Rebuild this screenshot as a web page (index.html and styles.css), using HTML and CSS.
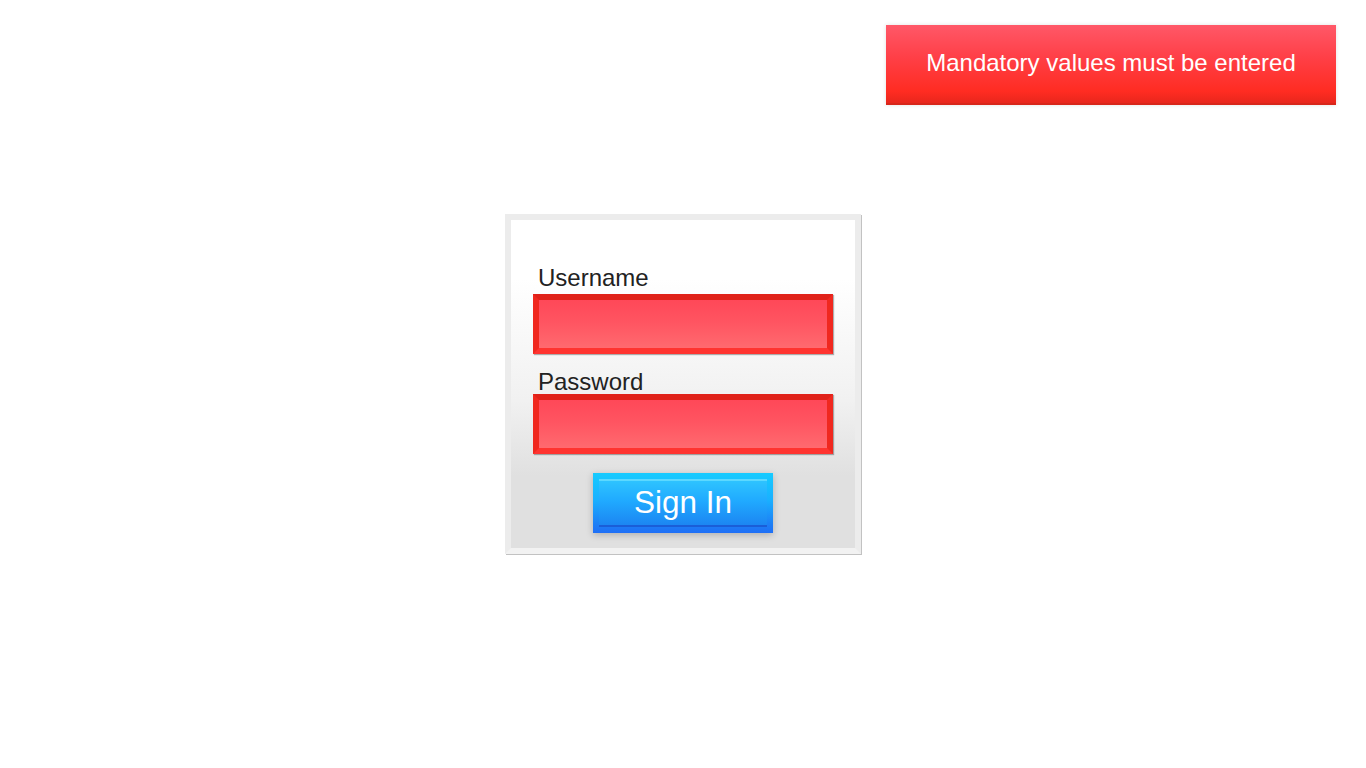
FILE: index.html
```html
<!DOCTYPE html>
<html lang="en">
<head>
<meta charset="utf-8">
<title>Sign In</title>
<link rel="stylesheet" href="styles.css">
</head>
<body>
<div class="toast">Mandatory values must be entered</div>
<main class="page">
  <form class="card">
    <div class="card-inner">
      <label class="field-label" for="username">Username</label>
      <input class="field field-error" id="username" type="text">
      <label class="field-label field-label-gap" for="password">Password</label>
      <input class="field field-error" id="password" type="password">
      <button class="btn" type="button"><span class="btn-inner">Sign In</span></button>
    </div>
  </form>
</main>
</body>
</html>
```

FILE: styles.css
```css
html, body {
  margin: 0;
  padding: 0;
  background: #ffffff;
  font-family: "Liberation Sans", Arial, Helvetica, sans-serif;
}

.page {
  height: 100vh;
  display: flex;
  align-items: center;
  justify-content: center;
}

.toast {
  position: absolute;
  top: 25px;
  right: 30px;
  width: 450px;
  height: 80px;
  box-sizing: border-box;
  display: flex;
  align-items: center;
  justify-content: center;
  padding-bottom: 3px;
  color: #ffffff;
  font-size: 24px;
  background: linear-gradient(#ff5868 0%, #ff4048 40%, #ff2c22 85%, #e8261c 100%);
  border-bottom: 2px solid #d8261a;
  box-shadow: 0 0 4px rgba(0, 0, 0, 0.12);
}

.card {
  margin: 0;
  border: 6px solid #ececec;
  border-bottom-color: #f2f2f2;
  box-shadow: 1px 1px 0 #c2c2c2;
}

.card-inner {
  width: 344px;
  box-sizing: border-box;
  padding: 46px 22px 15px;
  display: flex;
  flex-direction: column;
  align-items: stretch;
  background: linear-gradient(#ffffff 0%, #ffffff 18%, #f1f1f1 55%, #e0e0e0 78%, #e0e0e0 100%);
}

.field-label {
  display: block;
  font-size: 24px;
  line-height: 24px;
  height: 24px;
  color: #222222;
  margin-left: 5px;
}

.field-label-gap {
  margin-top: 16px;
}

.field {
  display: block;
  width: 300px;
  height: 60px;
  box-sizing: border-box;
  margin: 4px 0 0;
  padding: 0;
  outline: none;
  font: inherit;
}

.field-label-gap + .field {
  margin-top: 0;
}

.field-error {
  border: 6px solid;
  border-color: #e0221a #f0281f #ff3430 #f0281f;
  background: linear-gradient(#ff4858 0%, #ff5461 45%, #ff6a6f 100%);
  box-shadow: 1px 1px 1px rgba(0, 0, 0, 0.3);
}

.btn {
  align-self: center;
  margin-top: 19px;
  width: 180px;
  height: 60px;
  padding: 6px;
  box-sizing: border-box;
  border: none;
  background: linear-gradient(#16cbff 0%, #1ab0ff 45%, #1d7ff5 85%, #1f6ff6 100%);
  box-shadow: 0 2px 7px rgba(0, 0, 0, 0.22);
  cursor: pointer;
  font: inherit;
}

.btn-inner {
  display: flex;
  align-items: center;
  justify-content: center;
  height: 100%;
  box-sizing: border-box;
  border-top: 2px solid #5cd8ff;
  border-bottom: 2px solid #1a5ed8;
  background: linear-gradient(#2ec3ff 0%, #20aaff 45%, #1c86f2 100%);
  color: #ffffff;
  font-size: 31.5px;
  padding-bottom: 2px;
}
```
